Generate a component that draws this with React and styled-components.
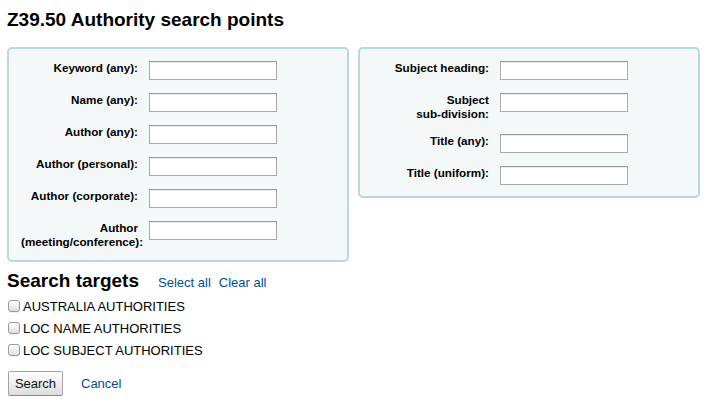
import React from "react";
import styled, { createGlobalStyle } from "styled-components";

const Global = createGlobalStyle`
  html, body { margin: 0; padding: 0; background: #fff; }
  body { font-family: "Liberation Sans", Arial, Helvetica, sans-serif; color: #000; }
`;

const Page = styled.div`
  padding: 9px 7px 0 7px;
`;

const Title = styled.h1`
  margin: 0 0 16px 0;
  font-size: 19px;
  line-height: 22px;
  font-weight: bold;
`;

const Columns = styled.div`
  display: flex;
  gap: 9px;
  align-items: flex-start;
`;

const FieldSet = styled.fieldset`
  box-sizing: border-box;
  width: 342px;
  flex: 0 0 342px;
  margin: 0;
  min-width: 0;
  padding: 12px 12px 11px 12px;
  border: 2px solid #b9d8d9;
  border-radius: 5px;
  background: #f4f8f9;
  display: flex;
  flex-direction: column;
  gap: 13px;
`;

const Row = styled.div`
  display: flex;
  align-items: flex-start;
`;

const Label = styled.label`
  flex: 0 0 117px;
  width: 117px;
  margin-right: 11px;
  text-align: right;
  font-weight: bold;
  font-size: 11.7px;
  line-height: 14px;
`;

const NoWrap = styled.span`
  white-space: nowrap;
`;

const TextInput = styled.input`
  box-sizing: border-box;
  width: 128px;
  height: 19px;
  margin: 0;
  padding: 1px 3px;
  border: 1px solid #aaa;
  border-top-color: #999;
  background: #fff;
  box-shadow: inset 0 1px 1px rgba(0, 0, 0, 0.08);
  font-family: inherit;
  font-size: 12px;
`;

const TargetsHeader = styled.div`
  display: flex;
  align-items: baseline;
  margin-top: 8px;
`;

const SubTitle = styled.h2`
  margin: 0 19px 0 0;
  font-size: 19px;
  line-height: 22px;
  font-weight: bold;
`;

const LinkGroup = styled.div`
  display: flex;
  gap: 8px;
  font-size: 13px;
`;

const Link = styled.a`
  color: #004d99;
  text-decoration: none;
  font-size: 13px;
  cursor: pointer;
`;

const TargetList = styled.div`
  margin-top: 3px;
  display: flex;
  flex-direction: column;
`;

const TargetRow = styled.label`
  display: flex;
  align-items: center;
  height: 22px;
  font-size: 13px;
`;

const Check = styled.input`
  appearance: none;
  -webkit-appearance: none;
  box-sizing: border-box;
  width: 12px;
  height: 12px;
  margin: 0 3px 0 1px;
  border: 1px solid #9a9a9a;
  border-radius: 3px;
  background: linear-gradient(#ffffff, #dedede);
  box-shadow: 0 1px 0 rgba(0, 0, 0, 0.05);
`;

const Actions = styled.div`
  display: flex;
  align-items: center;
  gap: 18px;
  margin-top: 10px;
  padding-left: 1px;
`;

const Button = styled.button`
  box-sizing: border-box;
  height: 25px;
  width: 55px;
  padding: 0;
  border: 1px solid #a4a4a4;
  border-bottom-color: #8a8a8a;
  border-radius: 2px;
  background: linear-gradient(#ffffff, #dcdcdc);
  font-family: "Liberation Sans", Arial, sans-serif;
  font-size: 13px;
  color: #111;
`;

const leftFields = [
  ["Keyword (any):"],
  ["Name (any):"],
  ["Author (any):"],
  ["Author (personal):"],
  ["Author (corporate):"],
  ["Author", "(meeting/conference):"],
];

const rightFields = [
  ["Subject heading:"],
  ["Subject", "sub-division:"],
  ["Title (any):"],
  ["Title (uniform):"],
];

const targets = [
  "AUSTRALIA AUTHORITIES",
  "LOC NAME AUTHORITIES",
  "LOC SUBJECT AUTHORITIES",
];

function Fields({ items, prefix }) {
  return (
    <FieldSet>
      {items.map((parts, i) => (
        <Row key={parts.join(" ")}>
          <Label htmlFor={`${prefix}${i}`}>
            {parts.map((p, j) => (
              <React.Fragment key={p}>
                {j > 0 ? " " : null}
                <NoWrap>{p}</NoWrap>
              </React.Fragment>
            ))}
          </Label>
          <TextInput id={`${prefix}${i}`} type="text" />
        </Row>
      ))}
    </FieldSet>
  );
}

export default function App() {
  return (
    <>
      <Global />
      <Page>
        <Title>Z39.50 Authority search points</Title>
        <Columns>
          <Fields items={leftFields} prefix="l" />
          <Fields items={rightFields} prefix="r" />
        </Columns>
        <TargetsHeader>
          <SubTitle>Search targets</SubTitle>
          <LinkGroup>
            <Link>Select all</Link>
            <Link>Clear all</Link>
          </LinkGroup>
        </TargetsHeader>
        <TargetList>
          {targets.map((t) => (
            <TargetRow key={t}>
              <Check type="checkbox" />
              {t}
            </TargetRow>
          ))}
        </TargetList>
        <Actions>
          <Button>Search</Button>
          <Link>Cancel</Link>
        </Actions>
      </Page>
    </>
  );
}
